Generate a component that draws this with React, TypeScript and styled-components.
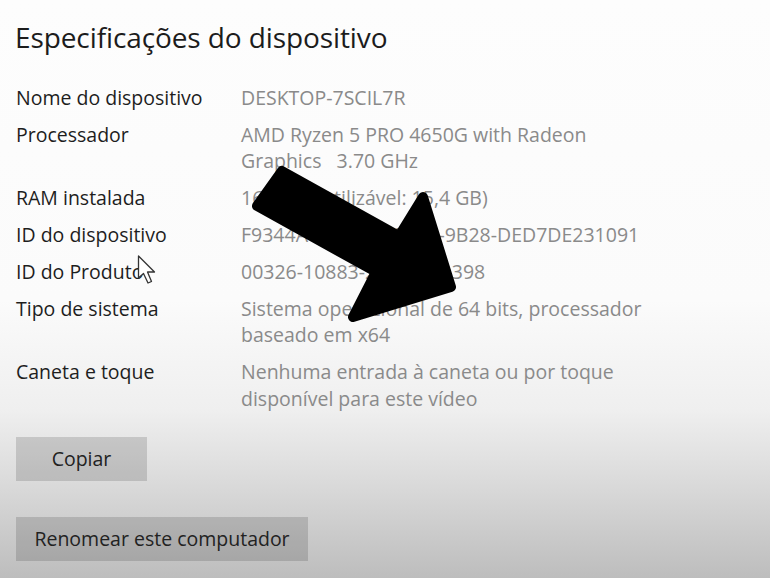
import styled, { createGlobalStyle } from 'styled-components';

const GlobalStyle = createGlobalStyle`
  html, body {
    margin: 0;
    padding: 0;
  }
  body {
    font-family: "Open Sans", "Noto Sans", sans-serif;
    background: #fcfcfc;
  }
`;

interface Spec {
  label: string;
  value: string[];
}

const specs: Spec[] = [
  { label: 'Nome do dispositivo', value: ['DESKTOP-7SCIL7R'] },
  { label: 'Processador', value: ['AMD Ryzen 5 PRO 4650G with Radeon', 'Graphics\u00a0\u00a0\u00a03.70 GHz'] },
  { label: 'RAM instalada', value: ['16,0 GB (utilizável: 15,4 GB)'] },
  { label: 'ID do dispositivo', value: ['F9344A1C-5E2B-4C7D-9B28-DED7DE231091'] },
  { label: 'ID do Produto', value: ['00326-10883-26187-AA398'] },
  { label: 'Tipo de sistema', value: ['Sistema operacional de 64 bits, processador', 'baseado em x64'] },
  { label: 'Caneta e toque', value: ['Nenhuma entrada à caneta ou por toque', 'disponível para este vídeo'] },
];

const Page = styled.div`
  position: relative;
  width: 770px;
  height: 578px;
  overflow: hidden;
  background: linear-gradient(
    to bottom,
    #fdfdfd 0px,
    #fbfbfb 300px,
    #efefef 410px,
    #d8d8d8 490px,
    #bdbdbd 578px
  );
`;

const Content = styled.div`
  padding: 18px 0 0 16px;
  display: flex;
  flex-direction: column;
`;

const Title = styled.h1`
  margin: 0 0 29px -1px;
  font-size: 28px;
  font-weight: 400;
  color: #1c1c1c;
  line-height: 38px;
  letter-spacing: -0.1px;
`;

const SpecList = styled.div`
  display: flex;
  flex-direction: column;
  gap: 10.8px;
`;

const SpecRow = styled.div`
  display: grid;
  grid-template-columns: 225px 1fr;
  font-size: 19.5px;
  line-height: 26.2px;
`;

const Label = styled.div`
  color: #1e1e1e;
`;

const Value = styled.div`
  color: #8a8a8a;
`;

const Buttons = styled.div`
  display: flex;
  flex-direction: column;
  align-items: flex-start;
  gap: 36px;
  margin-top: 25px;
`;

const Button = styled.button<{ $width: number }>`
  width: ${p => p.$width}px;
  height: 44px;
  border: none;
  padding: 0;
  background: rgba(0, 0, 0, 0.14);
  color: #222;
  font-family: "Open Sans", "Noto Sans", sans-serif;
  font-size: 19.5px;
`;

const Overlay = styled.svg`
  position: absolute;
  left: 0;
  top: 0;
  pointer-events: none;
`;

export default function App() {
  return (
    <>
      <GlobalStyle />
      <Page>
        <Content>
          <Title>Especificações do dispositivo</Title>
          <SpecList>
            {specs.map(s => (
              <SpecRow key={s.label}>
                <Label>{s.label}</Label>
                <Value>
                  {s.value.map(line => (
                    <div key={line}>{line}</div>
                  ))}
                </Value>
              </SpecRow>
            ))}
          </SpecList>
          <Buttons>
            <Button $width={131}>Copiar</Button>
            <Button $width={292}>Renomear este computador</Button>
          </Buttons>
        </Content>
        <Overlay width="770" height="578" viewBox="0 0 770 578">
          <path
            d="M282 171 L399 236 L423 197 L451 287 L353 317 L376 272 L257 206 Z"
            fill="#000"
            stroke="#000"
            strokeWidth="10"
            strokeLinejoin="round"
          />
          <path
            d="M138.5 256 L138.5 278 L143.5 273.5 L148 283 L151.5 281.5 L147.5 272 L154.5 272 Z"
            fill="#fff"
            stroke="#333"
            strokeWidth="1.3"
            strokeLinejoin="round"
          />
        </Overlay>
      </Page>
    </>
  );
}
